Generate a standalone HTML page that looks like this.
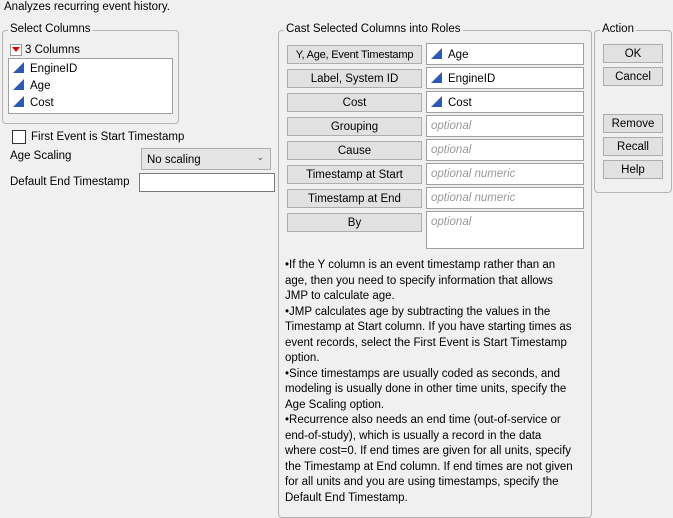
<html><head><style>
body{margin:0;width:673px;height:518px;background:#f0f0f0;font-family:"Liberation Sans",sans-serif;font-size:11.5px;color:#000;position:relative;overflow:hidden}
.a{position:absolute;white-space:nowrap}
.g{position:absolute;border:1px solid #b4b4b4;border-radius:4px}
.lg{position:absolute;background:#f0f0f0;padding:0 2px;top:-8px;left:5px;white-space:nowrap}
.b{position:absolute;background:#e1e1e1;border:1px solid #adadad;text-align:center;line-height:18px;box-sizing:border-box;white-space:nowrap;overflow:hidden}
.f{position:absolute;background:#fff;border:1px solid #a0a0a0;box-sizing:border-box;padding:4px 0 0 4px;white-space:nowrap}
.o{color:#999;font-style:italic}
.tri{display:inline-block;width:0;height:0;border-left:11px solid transparent;border-bottom:11px solid #2b5bb0;vertical-align:-1px;margin-right:6px}
</style></head><body>
<div class="a" style="left:4px;top:1px">Analyzes recurring event history.</div>
<div class="g" style="left:2px;top:30px;width:175px;height:92px"><div class="lg">Select Columns</div></div>
<div class="a" style="left:10px;top:44px;width:10px;height:10px;border:1px solid #999;background:#fff"></div>
<div class="a" style="left:12px;top:47px;width:0;height:0;border-left:4px solid transparent;border-right:4px solid transparent;border-top:5px solid #d00"></div>
<div class="a" style="left:25px;top:44px">3 Columns</div>
<div class="a" style="left:8px;top:58px;width:163px;height:54px;background:#fff;border:1px solid #a0a0a0"></div>
<div class="a" style="left:13px;top:62px"><span class="tri"></span>EngineID</div>
<div class="a" style="left:13px;top:79px"><span class="tri"></span>Age</div>
<div class="a" style="left:13px;top:96px"><span class="tri"></span>Cost</div>
<div class="a" style="left:12px;top:130px;width:12px;height:12px;border:1px solid #333;background:#fff"></div>
<div class="a" style="left:31px;top:131px">First Event is Start Timestamp</div>
<div class="a" style="left:10px;top:150px">Age Scaling</div>
<div class="a" style="left:141px;top:148px;width:130px;height:22px;background:#e5e5e5;border:1px solid #adadad;box-sizing:border-box;padding:5px 0 0 5px">No scaling<span style="position:absolute;right:6px;top:3px;font-size:9px;color:#555">&#8964;</span></div>
<div class="a" style="left:10px;top:176px">Default End Timestamp</div>
<div class="a" style="left:139px;top:173px;width:136px;height:19px;background:#fff;border:1px solid #7a7a7a;box-sizing:border-box"></div>

<div class="g" style="left:278px;top:30px;width:312px;height:486px"><div class="lg">Cast Selected Columns into Roles</div></div>
<div class="b" style="left:287px;top:45px;width:135px;height:19px;font-size:11px;letter-spacing:-0.2px">Y, Age, Event Timestamp</div>
<div class="b" style="left:287px;top:69px;width:135px;height:19px">Label, System ID</div>
<div class="b" style="left:287px;top:93px;width:135px;height:19px">Cost</div>
<div class="b" style="left:287px;top:117px;width:135px;height:19px">Grouping</div>
<div class="b" style="left:287px;top:141px;width:135px;height:19px">Cause</div>
<div class="b" style="left:287px;top:165px;width:135px;height:19px">Timestamp at Start</div>
<div class="b" style="left:287px;top:189px;width:135px;height:19px">Timestamp at End</div>
<div class="b" style="left:287px;top:213px;width:135px;height:19px">By</div>
<div class="f" style="left:426px;top:43px;width:158px;height:22px"><span class="tri"></span>Age</div>
<div class="f" style="left:426px;top:67px;width:158px;height:22px"><span class="tri"></span>EngineID</div>
<div class="f" style="left:426px;top:91px;width:158px;height:22px"><span class="tri"></span>Cost</div>
<div class="f o" style="left:426px;top:115px;width:158px;height:22px">optional</div>
<div class="f o" style="left:426px;top:139px;width:158px;height:22px">optional</div>
<div class="f o" style="left:426px;top:163px;width:158px;height:22px">optional numeric</div>
<div class="f o" style="left:426px;top:187px;width:158px;height:22px">optional numeric</div>
<div class="f o" style="left:426px;top:211px;width:158px;height:38px">optional</div>
<div class="a" style="left:285px;top:258px;line-height:15.5px;font-size:11.5px">•If the Y column is an event timestamp rather than an<br>age, then you need to specify information that allows<br>JMP to calculate age.<br>•JMP calculates age by subtracting the values in the<br>Timestamp at Start column. If you have starting times as<br>event records, select the First Event is Start Timestamp<br>option.<br>•Since timestamps are usually coded as seconds, and<br>modeling is usually done in other time units, specify the<br>Age Scaling option.<br>•Recurrence also needs an end time (out-of-service or<br>end-of-study), which is usually a record in the data<br>where cost=0. If end times are given for all units, specify<br>the Timestamp at End column. If end times are not given<br>for all units and you are using timestamps, specify the<br>Default End Timestamp.</div>

<div class="g" style="left:594px;top:30px;width:76px;height:161px"><div class="lg">Action</div></div>
<div class="b" style="left:603px;top:44px;width:60px;height:19px">OK</div>
<div class="b" style="left:603px;top:67px;width:60px;height:19px">Cancel</div>
<div class="b" style="left:603px;top:114px;width:60px;height:19px">Remove</div>
<div class="b" style="left:603px;top:137px;width:60px;height:19px">Recall</div>
<div class="b" style="left:603px;top:160px;width:60px;height:19px">Help</div>
</body></html>
